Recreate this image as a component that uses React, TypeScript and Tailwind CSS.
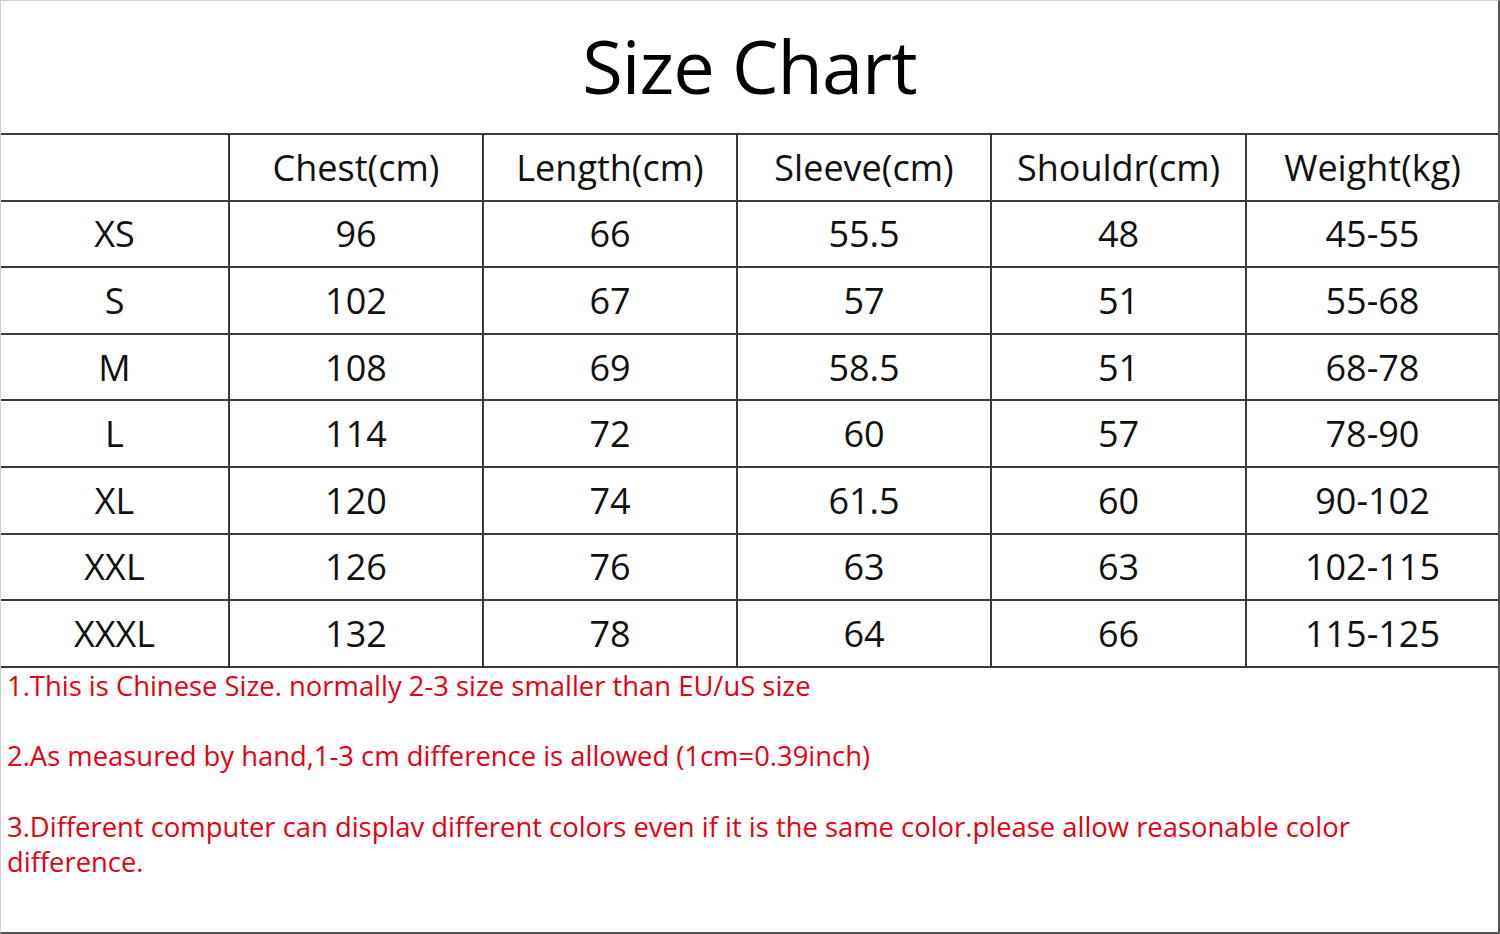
import React from "react";

const headers = ["", "Chest(cm)", "Length(cm)", "Sleeve(cm)", "Shouldr(cm)", "Weight(kg)"];
const rows = [
  ["XS", "96", "66", "55.5", "48", "45-55"],
  ["S", "102", "67", "57", "51", "55-68"],
  ["M", "108", "69", "58.5", "51", "68-78"],
  ["L", "114", "72", "60", "57", "78-90"],
  ["XL", "120", "74", "61.5", "60", "90-102"],
  ["XXL", "126", "76", "63", "63", "102-115"],
  ["XXXL", "132", "78", "64", "66", "115-125"],
];

function Row({ cells, top }: { cells: string[]; top?: boolean }) {
  return (
    <div
      className={`grid grid-cols-[227px_254px_254px_254px_255px_1fr] border-b-2 border-[#3a3a3a] ${
        top ? "border-t-2 h-[68.6px]" : "h-[66.6px]"
      }`}
    >
      {cells.map((c, i) => (
        <div
          key={i}
          className={`flex items-center justify-center text-[36px] text-[#111] leading-none ${
            i > 0 ? "border-l-2 border-[#3a3a3a]" : ""
          }`}
        >
          <span className="pt-[1px]">{c}</span>
        </div>
      ))}
    </div>
  );
}

export default function App() {
  return (
    <div
      className="w-[1500px] h-[934px] bg-white border border-[#cfcfcf] border-r-2 border-r-[#555] border-b-2 border-b-[#555] flex flex-col overflow-hidden"
      style={{ fontFamily: '"Open Sans", "Noto Sans", sans-serif' }}
    >
      <div className="h-[132px] flex items-center justify-center">
        <h1 className="text-[74px] leading-none text-black tracking-[-1px] pb-[2px]">Size Chart</h1>
      </div>
      <Row cells={headers} top />
      {rows.map((r, i) => (
        <Row key={i} cells={r} />
      ))}
      <div className="pl-[6px] text-[27.4px] leading-[35.3px] text-[#e60012]">
        <p>1.This is Chinese Size. normally 2-3 size smaller than EU/uS size</p>
        <p>&nbsp;</p>
        <p>2.As measured by hand,1-3 cm difference is allowed (1cm=0.39inch)</p>
        <p>&nbsp;</p>
        <p className="w-[1400px]">
          3.Different computer can displav different colors even if it is the same color.please allow reasonable color difference.
        </p>
      </div>
    </div>
  );
}
